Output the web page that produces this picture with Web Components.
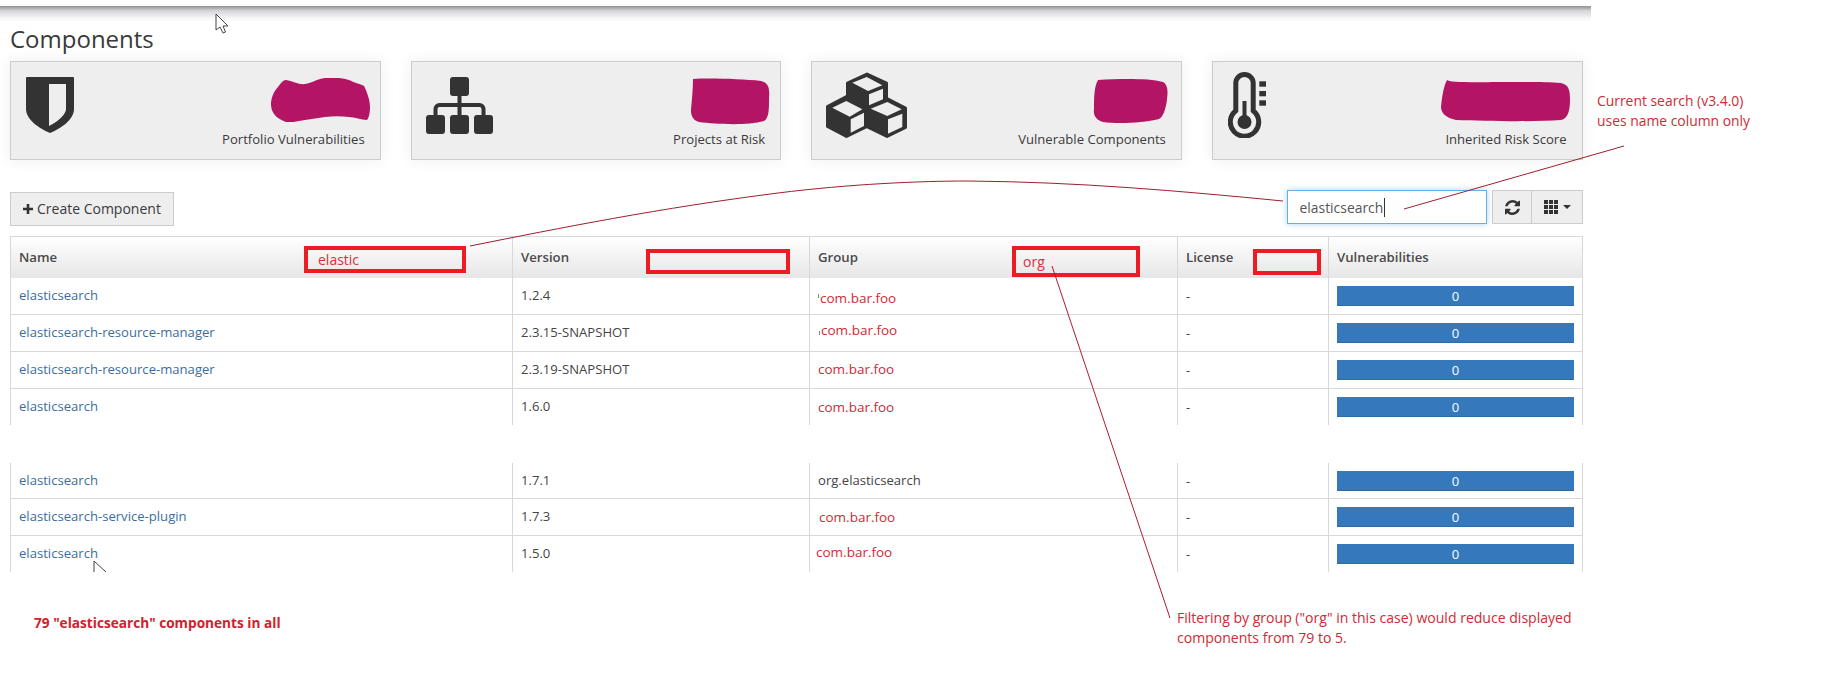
<!DOCTYPE html>
<html><head><meta charset="utf-8"><title>Components</title>
<style>html,body{margin:0;padding:0;background:#fff}body{font-family:"Open Sans",sans-serif;color:#333}</style>
</head><body>
<dt-page>
  <dt-stats>
    <dt-card label="Portfolio Vulnerabilities" pad="16" top="16" blobtop="17" blobright="-5">
      <svg slot="icon" width="48" height="56" viewBox="0 0 48 56"><path fill="#333" d="M1 0H47a1 1 0 0 1 1 1V32C48 42 36 51 24 56 12 51 0 42 0 32V1a1 1 0 0 1 1-1Z"/><path fill="#eee" d="M23 7H40V32C40 37 33 44 23 49Z"/></svg>
      <svg slot="blob" width="99" height="44" viewBox="0 0 99 44" preserveAspectRatio="none"><path fill="#b31464" d="M7 9C10 5 12 2 15 2 22 3 28 7 34 6 41 5 46 1 54 0 63-1 71 0 78 2 84 5 90 6 93 8 96 14 99 22 99 29 99 34 98 40 96 42 90 42 84 39 78 39 70 38 62 38 54 39 47 40 41 41 34 42 27 43 21 45 15 44 10 42 6 40 3 36 1 33 0 30 0 26 0 20 3 13 7 9Z"/></svg>
    </dt-card>
    <dt-card label="Projects at Risk" pad="15" top="16" blobtop="17" blobright="-5">
      <svg slot="icon" width="67" height="57" viewBox="0 0 67 57"><g fill="#333"><rect x="24" width="19" height="19" rx="3"/><rect y="38" width="19" height="19" rx="3"/><rect x="24" y="38" width="19" height="19" rx="3"/><rect x="48" y="38" width="19" height="19" rx="3"/></g><path fill="none" stroke="#333" stroke-width="4" d="M33.500 19V38M9.500 38V32a4 4 0 0 1 4-4H53.500a4 4 0 0 1 4 4V38"/></svg>
      <svg slot="blob" width="79" height="47" viewBox="0 0 79 47" preserveAspectRatio="none"><path fill="#b31464" d="M2 1C20 0 50 1 70 3 77 5 79 9 78 20 78 32 78 40 73 43 55 48 25 46 8 44 2 42 0 38 0 32 1 20 2 10 2 1Z"/></svg>
    </dt-card>
    <dt-card label="Vulnerable Components" pad="15" top="11" blobtop="18" blobright="-2">
      <svg slot="icon" width="81" height="66" viewBox="0 0 81 66"><g fill="#333" stroke="#333" stroke-width="3" stroke-linejoin="round"><path d="M41 2 60.500 11V34L41 45 21.500 34V11Z"/><path d="M20.500 24.500 40 34.500V55L20.500 64.500 1.500 54.500V34.500Z"/><path d="M61 26.500 79.500 36V55.500L61 64.500 41.500 55V36Z"/></g><g fill="#eee"><path d="M26.300 10.700 40.700 5 56.300 13.300 42 19Z"/><path d="M43 22.300 57 16.700V27.300L43 33.300Z"/><path d="M6.300 35.700 20.300 29 36.300 37.300 23.700 44.700Z"/><path d="M24.700 47.300 38 40.700V54L24.700 60.700Z"/><path d="M44.700 36.700 61.300 30 75.700 37.300 61.300 44Z"/><path d="M62 47.300 76.300 41.700V55L62 61.700Z"/></g></svg>
      <svg slot="blob" width="75" height="44" viewBox="0 0 75 44" preserveAspectRatio="none"><path fill="#b31464" d="M5 1C25 0 55-1 70 3 75 6 75 12 74 20 73 30 70 38 66 40 50 44 25 45 10 43 3 41 0 36 1 30 1 20 1 8 5 1Z"/></svg>
    </dt-card>
    <dt-card label="Inherited Risk Score" pad="16" top="11" blobtop="19" blobright="-3">
      <svg slot="icon" width="39" height="66" viewBox="0 0 39 66"><path fill="none" stroke="#333" stroke-width="5" d="M7.800 38.800V11.200A8.700 8.700 0 0 1 25.200 11.200V38.800A14.200 14.200 0 1 1 7.800 38.800Z"/><circle cx="16.500" cy="50" r="7" fill="#333"/><rect x="14.500" y="29" width="4" height="21" fill="#333"/><g fill="#333"><rect x="31.300" y="9.300" width="6.700" height="5.400"/><rect x="31.300" y="19" width="6.700" height="5.300"/><rect x="31.300" y="28.300" width="6.700" height="5.400"/></g></svg>
      <svg slot="blob" width="129" height="42" viewBox="0 0 129 42" preserveAspectRatio="none"><path fill="#b31464" d="M6 0C8 3 35 2 85 2 100 2 110 2 120 3 128 5 129 10 129 20 129 30 127 39 120 40 90 42 45 41 15 40 5 38 0 33 0 27 1 18 2 8 6 0Z"/></svg>
    </dt-card>
  </dt-stats>
  <dt-toolbar></dt-toolbar>
  <dt-table></dt-table>
  <dt-notes></dt-notes>
</dt-page>
<script>
class DtPage extends HTMLElement{constructor(){super();this.attachShadow({mode:'open'}).innerHTML=`<style>
:host{display:block;position:relative;width:1842px;height:676px;overflow:hidden;background:#fff;font-family:"Open Sans",sans-serif;color:#333}
.shade{width:1591px;height:16px;margin-top:6px;background:linear-gradient(#8f8f93,#d6d6d8 30%,#f6f6f6 75%,#fff)}
.main{width:1573px;margin-left:10px}
h1{margin:0;box-sizing:border-box;height:39px;font-weight:400;font-size:24px;line-height:22px;padding-top:6px;color:#3a3a3a}
</style><div class="shade"></div><div class="main"><h1>Components</h1><slot></slot></div>`;}}
customElements.define('dt-page',DtPage);

class DtStats extends HTMLElement{constructor(){super();this.attachShadow({mode:'open'}).innerHTML=`<style>
:host{display:grid;grid-template-columns:repeat(4,1fr);gap:30px;margin-right:.5px}
</style><slot></slot>`;}}
customElements.define('dt-stats',DtStats);

class DtCard extends HTMLElement{constructor(){super();const a=n=>this.getAttribute(n);this.attachShadow({mode:'open'}).innerHTML=`<style>
:host{display:flex;justify-content:space-between;box-sizing:border-box;height:99px;background:#eee;border:1px solid #ccc;box-shadow:0 0 14px rgba(0,0,0,.07)}
.icon{padding-left:${a('pad')-1}px;padding-top:${a('top')-1}px;line-height:0}
.right{display:flex;flex-direction:column;align-items:flex-end;justify-content:space-between;padding:${a('blobtop')-1}px 15px 10px 0}
.blob{margin-right:${a('blobright')}px;line-height:0}
.label{font-size:13.100px;line-height:20px;color:#3a3a3a;white-space:nowrap}
</style><div class="icon"><slot name="icon"></slot></div><div class="right"><div class="blob"><slot name="blob"></slot></div><div class="label">${a('label')}</div></div>`;}}
customElements.define('dt-card',DtCard);

class DtToolbar extends HTMLElement{constructor(){super();this.attachShadow({mode:'open'}).innerHTML=`<style>
:host{display:flex;align-items:flex-start;height:36px;margin-top:30px;margin-bottom:10px}
.create{display:flex;align-items:center;gap:4px;box-sizing:border-box;width:164px;height:34px;margin-top:2px;padding-left:12px;padding-bottom:1px;background:#eee;border:1px solid #ccc;font-size:14px;color:#3a3a3a;white-space:nowrap}
.search{display:flex;align-items:center;box-sizing:border-box;width:200px;height:34px;margin-left:auto;padding-left:12px;border:1px solid #66afe9;box-shadow:0 0 6px rgba(102,175,233,.55);font-size:13.900px;color:#555;background:#fff}
.search i{display:block;width:1px;height:19px;background:#333;margin-left:1px}
.btns{display:flex;box-sizing:border-box;width:91px;height:34px;margin-left:5.500px;background:#eee;border:1px solid #ccc}
.b1{display:flex;align-items:center;justify-content:center;width:38px;border-right:1px solid #ccc}
.b2{display:flex;align-items:center;gap:5px;padding-left:12px}
.caret{width:0;height:0;border:4px solid transparent;border-top-color:#333;border-bottom:0}
</style>
<div class="create"><svg width="10" height="10" viewBox="0 0 10 10"><path fill="#333" d="M3.700 0H6.300V3.700H10V6.300H6.300V10H3.700V6.300H0V3.700H3.700Z"/></svg><span>Create Component</span></div>
<div class="search"><span>elasticsearch</span><i></i></div>
<div class="btns"><div class="b1"><svg width="15" height="15" viewBox="128 128 1536 1536"><path fill="#333" d="M1639 1056q0 5-1 7-64 268-268 434.500t-478 166.500q-146 0-282.500-55t-243.500-157l-129 129q-19 19-45 19t-45-19-19-45v-448q0-26 19-45t45-19h448q26 0 45 19t19 45-19 45l-137 137q71 66 161 102t187 36q134 0 250-65t186-179q11-17 53-117 8-23 30-23h192q13 0 22.500 9.500t9.500 22.500zm25-800v448q0 26-19 45t-45 19h-448q-26 0-45-19t-19-45 19-45l138-138q-148-137-349-137-134 0-250 65t-186 179q-11 17-53 117-8 23-30 23h-199q-13 0-22.500-9.500t-9.500-22.500v-7q65-268 270-434.500t480-166.500q146 0 284 55.500t245 156.500l130-129q19-19 45-19t45 19 19 45z"/></svg></div>
<div class="b2"><svg width="14" height="14" viewBox="0 0 14 14"><g fill="#333"><rect width="4" height="4"/><rect x="5" width="4" height="4"/><rect x="10" width="4" height="4"/><rect y="5" width="4" height="4"/><rect x="5" y="5" width="4" height="4"/><rect x="10" y="5" width="4" height="4"/><rect y="10" width="4" height="4"/><rect x="5" y="10" width="4" height="4"/><rect x="10" y="10" width="4" height="4"/></g></svg><span class="caret"></span></div></div>`;}}
customElements.define('dt-toolbar',DtToolbar);

const cols='502px 297px 368px 151px 255px';
const rowStyle=`display:grid;grid-template-columns:${cols};`;
const rows1=[
 ['elasticsearch','1.2.4','com.bar.foo',1,2,2,1],
 ['elasticsearch-resource-manager','2.3.15-SNAPSHOT','com.bar.foo',1,3,-3,1],
 ['elasticsearch-resource-manager','2.3.19-SNAPSHOT','com.bar.foo',1,0,-1,0],
 ['elasticsearch','1.6.0','com.bar.foo',1,0,0,0]];
const rows2=[
 ['elasticsearch','1.7.1','org.elasticsearch',0,0,-1,0],
 ['elasticsearch-service-plugin','1.7.3','com.bar.foo',1,1,0,0],
 ['elasticsearch','1.5.0','com.bar.foo',1,-2,-2,0]];

class DtRow extends HTMLElement{
 set data(d){const [n,v,g,red,dx,dy,tick]=d;
  this.attachShadow({mode:'open'}).innerHTML=`<style>
:host{${rowStyle}height:var(--h,37px);box-sizing:border-box;border-bottom:1px solid #d8d8d8}
:host([last]){border-bottom:0}
.c{display:flex;align-items:center;box-sizing:border-box;padding-left:8px;border-left:1px solid #d8d8d8;font-size:13.100px;color:#444;white-space:nowrap;min-width:0}
.up{padding-bottom:2px}
.c:first-child{padding-left:9px}
.c:last-child{border-right:1px solid #d8d8d8;padding-right:8px}
.n{color:#3d6d9e}
.g{padding-left:${8+dx}px;${red?'color:#cf2a35;font-size:13.500px;':''}}
.g span{margin-top:${dy>0?2*dy:0}px;margin-bottom:${dy<0?-2*dy:0}px}
.g i{display:block;width:1px;height:4px;background:#888;margin:0 1px 0 -2px}
.bar{width:100%;height:20px;background:#3579bc;color:#fff;text-align:center;font-size:13px;line-height:20px;border-bottom:1px solid #2f6aa6;box-sizing:border-box}
</style><div class="c n up">${n}</div><div class="c up">${v}</div><div class="c g">${tick?'<i></i>':''}<span>${g}</span></div><div class="c">-</div><div class="c"><div class="bar">0</div></div>`;}}
customElements.define('dt-row',DtRow);

class DtTh extends HTMLElement{constructor(){super();const a=n=>this.getAttribute(n);const f=this.hasAttribute('w');
 this.attachShadow({mode:'open'}).innerHTML=`<style>
:host{display:flex;align-items:center;box-sizing:border-box;padding-left:8px;border-left:1px solid #d8d8d8;font-weight:600;font-size:13.200px;color:#4a4a4a;white-space:nowrap}
.t{margin-top:-1px}
.f{display:flex;align-items:center;box-sizing:border-box;margin-left:auto;align-self:flex-start;border:4px solid #ed1c24;font-weight:400;color:#d9303a;font-size:14px}
</style><span class="t"><slot></slot></span>${f?`<div class="f" style="width:${a('w')}px;height:${a('h')}px;margin-top:${a('mt')}px;margin-right:${a('mr')}px;padding-left:${a('pl')||0}px">${a('val')||''}</div>`:''}`;}}
customElements.define('dt-th',DtTh);

class DtTable extends HTMLElement{constructor(){super();const s=this.attachShadow({mode:'open'});
 s.innerHTML=`<style>
:host{display:block}
.head{${rowStyle}height:42px;box-sizing:border-box;border-top:1px solid #d8d8d8;border-right:1px solid #d8d8d8;background:linear-gradient(#fff,#e6e6e6)}
.gap{height:38px}
.b2 dt-row:first-child{--h:36px}
</style>
<div class="head">
 <dt-th w="162" h="27" mt="9" mr="46" pl="10" val="elastic">Name</dt-th>
 <dt-th w="144" h="25" mt="12" mr="19">Version</dt-th>
 <dt-th w="128" h="31" mt="9" mr="37" pl="7" val="org">Group</dt-th>
 <dt-th w="68" h="26" mt="12" mr="7">License</dt-th>
 <dt-th>Vulnerabilities</dt-th>
</div><div class="b1"></div><div class="gap"></div><div class="b2"></div>`;
 const add=(sel,list)=>{const box=s.querySelector(sel);list.forEach((d,i)=>{const r=document.createElement('dt-row');if(i==list.length-1)r.setAttribute('last','');r.data=d;box.appendChild(r);});};
 add('.b1',rows1);add('.b2',rows2);
 s.querySelectorAll('.b1 dt-row')[3].style.setProperty('--h','36px');
 s.querySelectorAll('.b2 dt-row')[2].style.setProperty('--h','36px');
}}
customElements.define('dt-table',DtTable);

class DtNotes extends HTMLElement{constructor(){super();this.attachShadow({mode:'open'}).innerHTML=`<style>
:host{position:absolute;inset:0;display:block;pointer-events:none;color:#cf2a35;font-size:13.900px;line-height:19.500px}
svg{position:absolute;left:0;top:0}
.n{position:absolute;white-space:nowrap}
.b{font-weight:700;color:#d3202c;font-size:13.650px}
.f{font-size:14.050px}
</style>
<svg width="1842" height="676" viewBox="0 0 1842 676" fill="none">
 <path d="M470 246C560 228 660 208 778 193 850 184 920 181 968 181 1080 182 1180 191 1283 201" stroke="#9c1f2e" stroke-width="1"/>
 <path d="M1404 209L1624 146" stroke="#9c1f2e" stroke-width="1"/>
 <path d="M1052 266L1170 618" stroke="#a81f30" stroke-width="1"/>
 <path d="M216 14V30L220 27 223 33 225.500 32 223 26H228Z" fill="#fff" stroke="#444" stroke-width="1"/>
 <path d="M94 572V561L106 572" stroke="#444" stroke-width="1"/>
</svg>
<div class="n" style="left:1597px;top:91px">Current search (v3.4.0)<br>uses name column only</div>
<div class="n f" style="left:1177px;top:608px">Filtering by group ("org" in this case) would reduce displayed<br>components from 79 to 5.</div>
<div class="n b" style="left:34px;top:613px">79 "elasticsearch" components in all</div>`;}}
customElements.define('dt-notes',DtNotes);
</script>
</body></html>
